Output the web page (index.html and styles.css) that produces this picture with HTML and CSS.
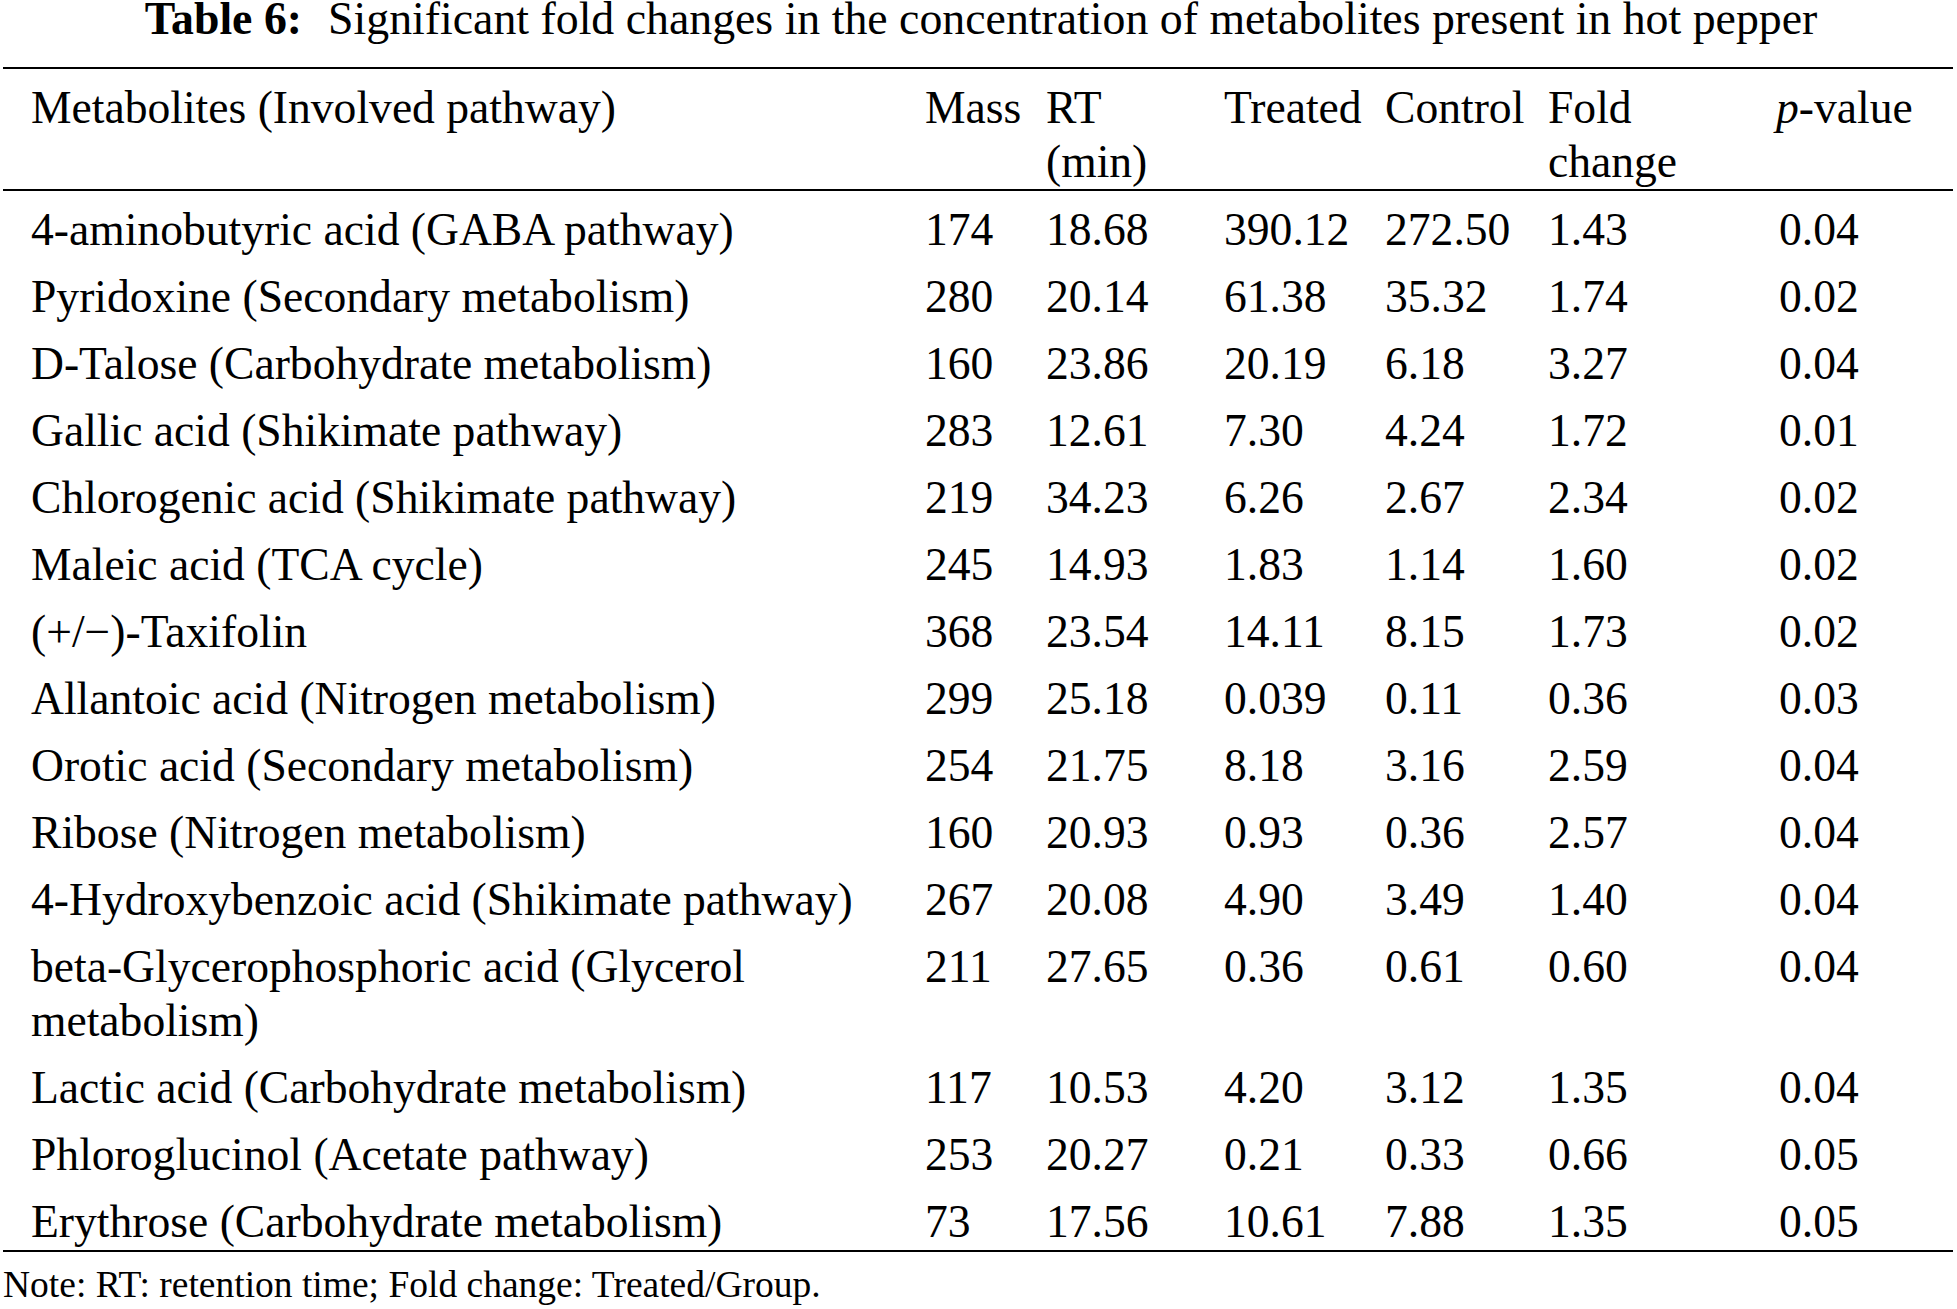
FILE: index.html
```html
<!DOCTYPE html>
<html lang="en">
<head>
<meta charset="utf-8">
<title>Table 6</title>
<link rel="stylesheet" href="styles.css">
</head>
<body>
<div class="page">
  <div class="caption"><b>Table 6:</b><span class="gap"></span>Significant fold changes in the concentration of metabolites present in hot pepper</div>
  <table class="data">
    <colgroup>
      <col class="c-name">
      <col class="c-mass">
      <col class="c-rt">
      <col class="c-treated">
      <col class="c-control">
      <col class="c-fold">
      <col class="c-p">
    </colgroup>
    <thead>
      <tr>
        <th class="name">Metabolites (Involved pathway)</th>
        <th>Mass</th>
        <th>RT<br>(min)</th>
        <th>Treated</th>
        <th>Control</th>
        <th>Fold<br>change</th>
        <th><i>p</i>-value</th>
      </tr>
    </thead>
    <tbody>
      <tr><td class="name">4-aminobutyric acid (GABA pathway)</td><td>174</td><td>18.68</td><td>390.12</td><td>272.50</td><td>1.43</td><td class="pv">0.04</td></tr>
      <tr><td class="name">Pyridoxine (Secondary metabolism)</td><td>280</td><td>20.14</td><td>61.38</td><td>35.32</td><td>1.74</td><td class="pv">0.02</td></tr>
      <tr><td class="name">D-Talose (Carbohydrate metabolism)</td><td>160</td><td>23.86</td><td>20.19</td><td>6.18</td><td>3.27</td><td class="pv">0.04</td></tr>
      <tr><td class="name">Gallic acid (Shikimate pathway)</td><td>283</td><td>12.61</td><td>7.30</td><td>4.24</td><td>1.72</td><td class="pv">0.01</td></tr>
      <tr><td class="name">Chlorogenic acid (Shikimate pathway)</td><td>219</td><td>34.23</td><td>6.26</td><td>2.67</td><td>2.34</td><td class="pv">0.02</td></tr>
      <tr><td class="name">Maleic acid (TCA cycle)</td><td>245</td><td>14.93</td><td>1.83</td><td>1.14</td><td>1.60</td><td class="pv">0.02</td></tr>
      <tr><td class="name">(+/−)-Taxifolin</td><td>368</td><td>23.54</td><td>14.11</td><td>8.15</td><td>1.73</td><td class="pv">0.02</td></tr>
      <tr><td class="name">Allantoic acid (Nitrogen metabolism)</td><td>299</td><td>25.18</td><td>0.039</td><td>0.11</td><td>0.36</td><td class="pv">0.03</td></tr>
      <tr><td class="name">Orotic acid (Secondary metabolism)</td><td>254</td><td>21.75</td><td>8.18</td><td>3.16</td><td>2.59</td><td class="pv">0.04</td></tr>
      <tr><td class="name">Ribose (Nitrogen metabolism)</td><td>160</td><td>20.93</td><td>0.93</td><td>0.36</td><td>2.57</td><td class="pv">0.04</td></tr>
      <tr><td class="name">4-Hydroxybenzoic acid (Shikimate pathway)</td><td>267</td><td>20.08</td><td>4.90</td><td>3.49</td><td>1.40</td><td class="pv">0.04</td></tr>
      <tr><td class="name">beta-Glycerophosphoric acid (Glycerol metabolism)</td><td>211</td><td>27.65</td><td>0.36</td><td>0.61</td><td>0.60</td><td class="pv">0.04</td></tr>
      <tr><td class="name">Lactic acid (Carbohydrate metabolism)</td><td>117</td><td>10.53</td><td>4.20</td><td>3.12</td><td>1.35</td><td class="pv">0.04</td></tr>
      <tr><td class="name">Phloroglucinol (Acetate pathway)</td><td>253</td><td>20.27</td><td>0.21</td><td>0.33</td><td>0.66</td><td class="pv">0.05</td></tr>
      <tr class="last"><td class="name">Erythrose (Carbohydrate metabolism)</td><td>73</td><td>17.56</td><td>10.61</td><td>7.88</td><td>1.35</td><td class="pv">0.05</td></tr>
    </tbody>
  </table>
  <div class="note">Note: RT: retention time; Fold change: Treated/Group.</div>
</div>
</body>
</html>
```

FILE: styles.css
```css
html, body {
  margin: 0;
  padding: 0;
  background: #ffffff;
}

body {
  width: 1957px;
  font-family: "Liberation Serif", "Times New Roman", serif;
  color: #000000;
}

.page {
  padding: 0 4px 0 3px;
}

.caption {
  font-size: 45.8px;
  line-height: 38px;
  text-align: center;
  margin: 0 0 29px 6px;
  white-space: nowrap;
}

.caption b {
  font-weight: bold;
}

.caption .gap {
  display: inline-block;
  width: 26px;
}

.data {
  width: 1950px;
  table-layout: fixed;
  border-collapse: separate;
  border-spacing: 0;
  font-size: 45.6px;
  line-height: 54px;
}

.c-name { width: 922px; }
.c-mass { width: 121px; }
.c-rt { width: 178px; }
.c-treated { width: 161px; }
.c-control { width: 163px; }
.c-fold { width: 228px; }
.c-p { width: 177px; }

.data th,
.data td {
  text-align: left;
  vertical-align: top;
  font-weight: normal;
  padding: 12px 0 1px 0;
}

.data th {
  padding: 12px 0 0 0;
  border-top: 2px solid #000000;
  border-bottom: 2px solid #000000;
}

.data .name {
  padding-left: 28px;
  padding-right: 8px;
}

.data td.pv {
  padding-left: 3px;
}

.data tr.last td {
  border-bottom: 2px solid #000000;
}

.note {
  font-size: 37.5px;
  line-height: 40px;
  margin-top: 13px;
  white-space: nowrap;
}
```
